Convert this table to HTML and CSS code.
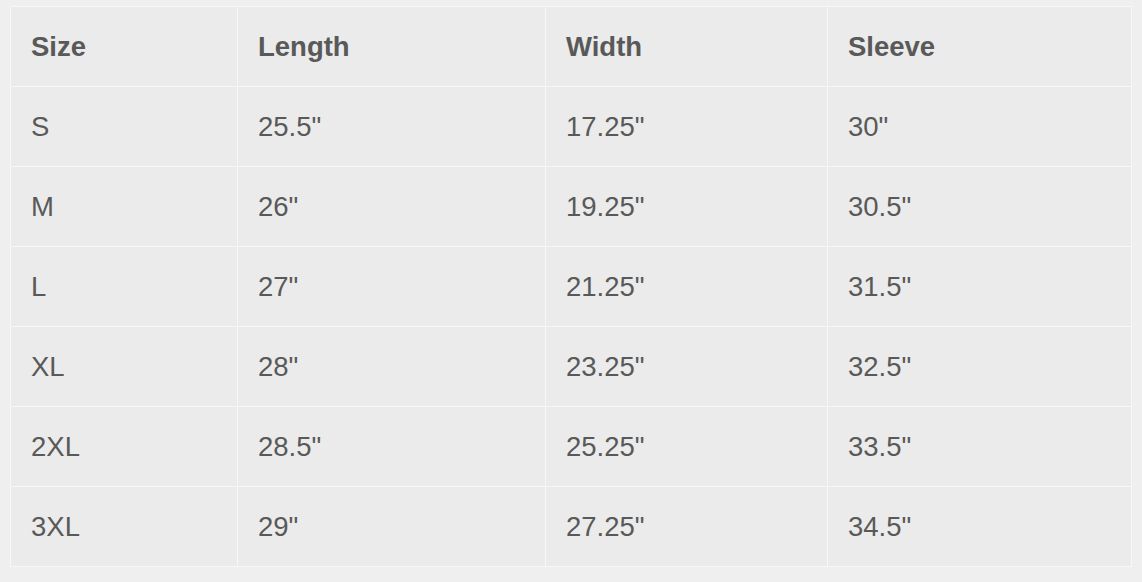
FILE: index.html
```html
<!DOCTYPE html>
<html>
<head>
<meta charset="utf-8">
<link rel="stylesheet" href="styles.css">
</head>
<body>
<table class="size-table">
  <colgroup>
    <col class="c1"><col class="c2"><col class="c3"><col class="c4">
  </colgroup>
  <thead>
    <tr><th>Size</th><th>Length</th><th>Width</th><th>Sleeve</th></tr>
  </thead>
  <tbody>
    <tr><td>S</td><td>25.5"</td><td>17.25"</td><td>30"</td></tr>
    <tr><td>M</td><td>26"</td><td>19.25"</td><td>30.5"</td></tr>
    <tr><td>L</td><td>27"</td><td>21.25"</td><td>31.5"</td></tr>
    <tr><td>XL</td><td>28"</td><td>23.25"</td><td>32.5"</td></tr>
    <tr><td>2XL</td><td>28.5"</td><td>25.25"</td><td>33.5"</td></tr>
    <tr><td>3XL</td><td>29"</td><td>27.25"</td><td>34.5"</td></tr>
  </tbody>
</table>
</body>
</html>
```
FILE: styles.css
```css
html, body {
  margin: 0;
  padding: 0;
  background: #efefef;
}
body {
  padding: 6px 0 0 10px;
  font-family: "Liberation Sans", Arial, Helvetica, sans-serif;
  color: #595959;
}
.size-table {
  border-collapse: collapse;
  table-layout: fixed;
  width: 1121px;
  background: #ebebeb;
}
.c1 { width: 227px; }
.c2 { width: 308px; }
.c3 { width: 282px; }
.c4 { width: 304px; }
.size-table th,
.size-table td {
  border: 1px solid #f7f7f7;
  box-sizing: border-box;
  height: 80px;
  padding: 1px 0 0 20px;
  text-align: left;
  vertical-align: middle;
  font-size: 27.5px;
}
.size-table th {
  font-weight: bold;
}
.size-table td {
  font-weight: normal;
}
```
